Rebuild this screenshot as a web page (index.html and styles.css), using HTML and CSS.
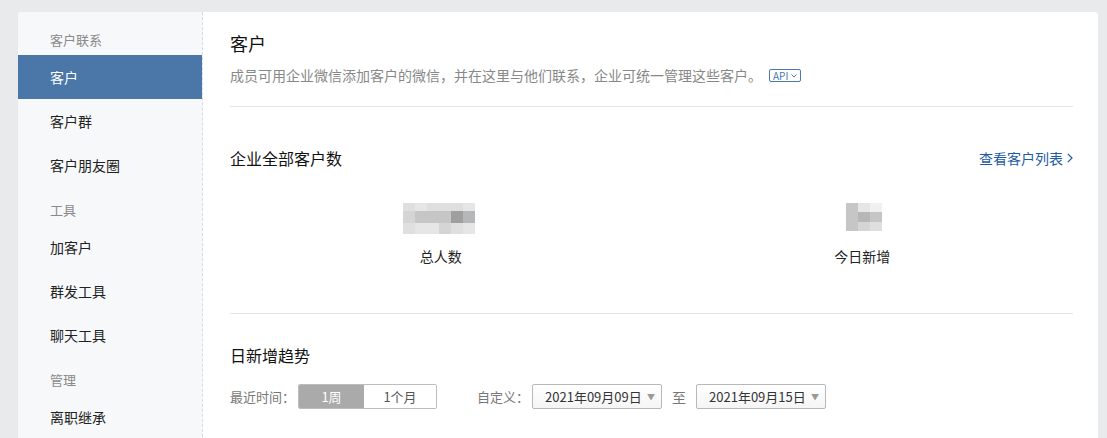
FILE: index.html
```html
<!DOCTYPE html>
<html lang="zh-CN">
<head>
    <meta charset="UTF-8">
    <meta name="viewport" content="width=device-width, initial-scale=1.0">
    <title>客户</title>
    <link rel="stylesheet" href="styles.css">
</head>
<body>

    <div class="card">
        <div class="sidebar">
            <div class="group-label">客户联系</div>
            <div class="menu-item active">客户</div>
            <div class="menu-item">客户群</div>
            <div class="menu-item">客户朋友圈</div>

            <div class="group-label">工具</div>
            <div class="menu-item">加客户</div>
            <div class="menu-item">群发工具</div>
            <div class="menu-item">聊天工具</div>

            <div class="group-label">管理</div>
            <div class="menu-item">离职继承</div>
        </div>

        <div class="main">
            <div class="section header">
                <h1 class="page-title">客户</h1>
                <p class="desc">
                    成员可用企业微信添加客户的微信，并在这里与他们联系，企业可统一管理这些客户。<span class="api-badge">API
                        <svg width="6" height="4" viewBox="0 0 6 4"><polyline points="0.5,0.5 3,3 5.5,0.5" fill="none" stroke="currentColor" stroke-width="1"/></svg>
                    </span>
                </p>
            </div>

            <div class="section stats-section">
                <div class="section-head">
                    <h2 class="section-title">企业全部客户数</h2>
                    <a class="link" href="#">查看客户列表
                        <svg width="6" height="10" viewBox="0 0 6 10"><polyline points="0.8,0.8 5,5 0.8,9.2" fill="none" stroke="currentColor" stroke-width="1.2"/></svg>
                    </a>
                </div>
                <div class="stats">
                    <div class="stat">
                        <div class="blur blur-total">
                            <span class="s2"></span><span class="s1"></span><span class="s2"></span><span class="s2"></span><span class="s2"></span><span class="s1"></span>
                            <span class="s3"></span><span class="s4"></span><span class="s4"></span><span class="s4"></span><span class="s6"></span><span class="s5"></span>
                            <span class="s2"></span><span class="s1"></span><span class="s1"></span><span class="s3"></span><span class="s2"></span><span class="s1"></span>
                        </div>
                        <div class="stat-label">总人数</div>
                    </div>
                    <div class="stat">
                        <div class="blur blur-today">
                            <span class="s4"></span><span class="s1"></span><span class="s0"></span>
                            <span class="s4"></span><span class="s5"></span><span class="s4"></span>
                            <span class="s4"></span><span class="s3"></span><span class="s2"></span>
                        </div>
                        <div class="stat-label">今日新增</div>
                    </div>
                </div>
            </div>

            <div class="section trend-section">
                <h2 class="section-title">日新增趋势</h2>
                <div class="filters">
                    <span class="filter-label">最近时间：</span>
                    <div class="segmented">
                        <button class="seg active">1周</button>
                        <button class="seg">1个月</button>
                    </div>
                    <span class="filter-label custom">自定义：</span>
                    <div class="select">2021年09月09日<span class="arrow">▼</span></div>
                    <span class="to">至</span>
                    <div class="select">2021年09月15日<span class="arrow">▼</span></div>
                </div>
            </div>
        </div>
    </div>

</body>
</html>
```

FILE: styles.css
```css
body {
    margin: 0;
    padding: 12px 9px 0 18px;
    background-color: #e9eaec;
    font-family: "Noto Sans CJK SC", "Liberation Sans", sans-serif;
    color: #222;
    overflow: hidden;
}
.card {
    display: flex;
    width: 1080px;
    min-height: 440px;
    background-color: #fff;
    border-radius: 4px 4px 0 0;
    overflow: hidden;
}

/* sidebar */
.sidebar {
    width: 184px;
    padding-top: 5px;
    background-color: #f7f8fa;
    border-right: 1px dashed #d9dbde;
    flex-shrink: 0;
}
.group-label {
    padding: 13px 0 5px 32px;
    font-size: 13px;
    line-height: 20px;
    color: #8a8a8a;
}
.menu-item {
    height: 44px;
    line-height: 44px;
    padding-left: 32px;
    font-size: 14px;
    color: #222;
}
.menu-item.active {
    background-color: #4a76a8;
    color: #fff;
}

/* main */
.main {
    flex: 1;
    padding: 0 25px 0 27px;
}
.section {
    border-bottom: 1px solid #e4e6e9;
}
.header {
    padding: 19px 0 21px;
}
.page-title {
    margin: 0;
    font-size: 18px;
    font-weight: normal;
    line-height: 24px;
    color: #111;
}
.desc {
    margin: 10px 0 0;
    font-size: 14px;
    line-height: 20px;
    color: #888;
}
.api-badge {
    display: inline-flex;
    align-items: center;
    gap: 3px;
    height: 11px;
    margin-left: 7px;
    padding: 0 3px;
    border: 1px solid #4a78b0;
    border-radius: 2px;
    font-size: 10px;
    line-height: 11px;
    color: #4a78b0;
    vertical-align: 1px;
}

.stats-section {
    padding: 39px 0 47px;
}
.section-head {
    display: flex;
    justify-content: space-between;
    align-items: center;
}
.section-title {
    margin: 0;
    font-size: 16px;
    font-weight: normal;
    line-height: 24px;
    color: #111;
}
.link {
    display: flex;
    align-items: center;
    gap: 4px;
    font-size: 14px;
    line-height: 20px;
    color: #1d5ba3;
    text-decoration: none;
}
.stats {
    display: flex;
    margin-top: 33px;
}
.stat {
    flex: 1;
    display: flex;
    flex-direction: column;
    align-items: center;
}
.blur {
    display: grid;
    height: 31px;
}
.blur-total {
    margin-right: 4px;
    grid-template-columns: repeat(6, 12px);
    grid-template-rows: 8px 12px 11px;
}
.blur-today {
    margin-left: 4px;
    grid-template-columns: repeat(3, 12px);
    grid-template-rows: 9px 10px 9px;
    height: 28px;
    margin-bottom: 3px;
}
.s0 { background-color: #f0f0f0; }
.s1 { background-color: #e6e6e6; }
.s2 { background-color: #dfdfdf; }
.s3 { background-color: #d5d5d5; }
.s4 { background-color: #c6c6c7; }
.s5 { background-color: #b6b7b8; }
.s6 { background-color: #9f9f9f; }
.stat-label {
    margin-top: 12px;
    font-size: 14px;
    line-height: 20px;
    color: #222;
}

.trend-section {
    padding: 29px 0 40px;
    border-bottom: none;
}
.filters {
    display: flex;
    align-items: center;
    margin-top: 17px;
    font-size: 13px;
}
.filter-label {
    color: #777;
    margin-right: 3px;
}
.filter-label.custom {
    margin-left: 40px;
    margin-right: 3px;
}
.segmented {
    display: flex;
    border: 1px solid #bdbdbd;
    border-radius: 2px;
    overflow: hidden;
}
.seg {
    height: 23px;
    border: none;
    background: #fff;
    font-family: inherit;
    font-size: 13px;
    color: #555;
    padding: 0;
    width: 72px;
}
.seg.active {
    width: 65px;
    background-color: #aaa;
    color: #fff;
}
.select {
    display: flex;
    align-items: center;
    justify-content: space-between;
    box-sizing: border-box;
    width: 130px;
    height: 25px;
    padding: 0 6px 0 12px;
    border: 1px solid #b8b8b8;
    border-radius: 2px;
    background: linear-gradient(#fff, #f5f5f5);
    color: #333;
    font-size: 13px;
}
.arrow {
    font-size: 8px;
    color: #999;
}
.to {
    margin: 0 10px;
    font-size: 14px;
    color: #777;
}
```
